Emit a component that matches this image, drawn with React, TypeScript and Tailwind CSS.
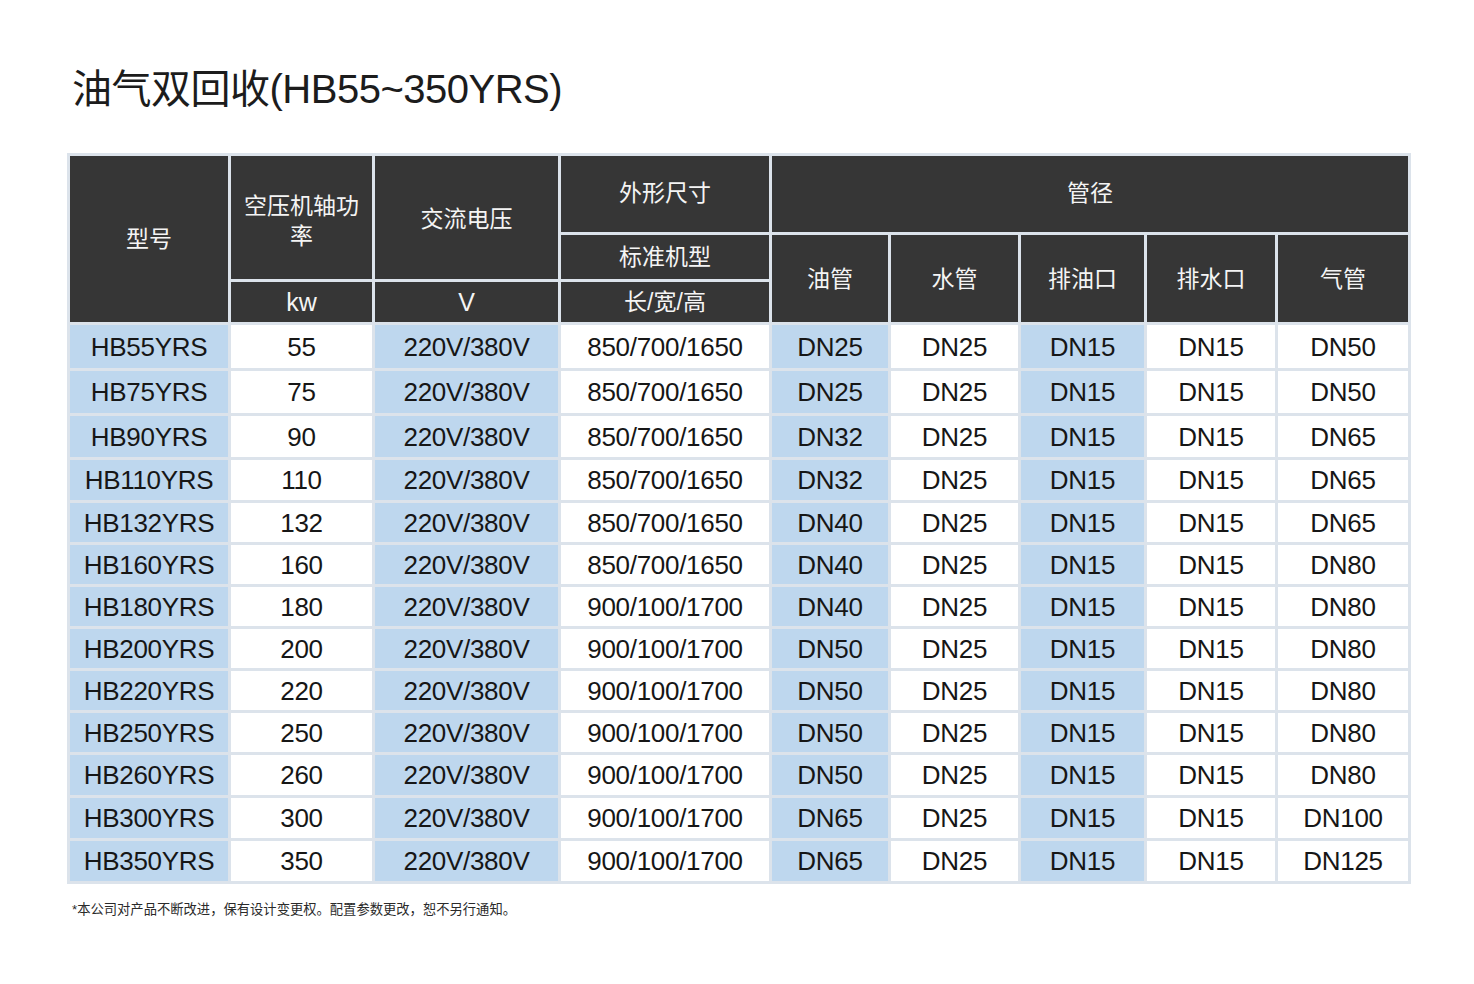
import React from "react";

const rows: string[][] = [
  ["HB55YRS", "55", "220V/380V", "850/700/1650", "DN25", "DN25", "DN15", "DN15", "DN50"],
  ["HB75YRS", "75", "220V/380V", "850/700/1650", "DN25", "DN25", "DN15", "DN15", "DN50"],
  ["HB90YRS", "90", "220V/380V", "850/700/1650", "DN32", "DN25", "DN15", "DN15", "DN65"],
  ["HB110YRS", "110", "220V/380V", "850/700/1650", "DN32", "DN25", "DN15", "DN15", "DN65"],
  ["HB132YRS", "132", "220V/380V", "850/700/1650", "DN40", "DN25", "DN15", "DN15", "DN65"],
  ["HB160YRS", "160", "220V/380V", "850/700/1650", "DN40", "DN25", "DN15", "DN15", "DN80"],
  ["HB180YRS", "180", "220V/380V", "900/100/1700", "DN40", "DN25", "DN15", "DN15", "DN80"],
  ["HB200YRS", "200", "220V/380V", "900/100/1700", "DN50", "DN25", "DN15", "DN15", "DN80"],
  ["HB220YRS", "220", "220V/380V", "900/100/1700", "DN50", "DN25", "DN15", "DN15", "DN80"],
  ["HB250YRS", "250", "220V/380V", "900/100/1700", "DN50", "DN25", "DN15", "DN15", "DN80"],
  ["HB260YRS", "260", "220V/380V", "900/100/1700", "DN50", "DN25", "DN15", "DN15", "DN80"],
  ["HB300YRS", "300", "220V/380V", "900/100/1700", "DN65", "DN25", "DN15", "DN15", "DN100"],
  ["HB350YRS", "350", "220V/380V", "900/100/1700", "DN65", "DN25", "DN15", "DN15", "DN125"],
];

const blueCols = new Set([0, 2, 4, 6]);

const H = "bg-[#363636] text-[#f4f4f4] flex items-center justify-center text-center text-[23px] leading-[30px]";
const cjk = { fontFamily: '"Liberation Sans", "Noto Sans CJK SC", sans-serif' };

export default function App() {
  return (
    <div className="min-h-[984px] w-[1474px] bg-white pl-[67px] pt-[64px]" style={cjk}>
      <h1 className="ml-[5px] text-[40px] leading-[50px] text-[#1c1c1c] tracking-[-0.5px] font-normal">
        油气双回收(HB55~350YRS)
      </h1>
      <div className="mt-[39px] inline-grid bg-[#dce3eb] p-[3px] gap-[3px] grid-cols-[158px_141px_183px_208px_116px_127px_123px_128px_130px] grid-rows-[76px_44px_40px_43px_42px_41px_40px_39px_39px_39px_39px_39px_39px_40px_40px_40px]">
        <div className={`${H} col-start-1 row-start-1 row-span-3`}>型号</div>
        <div className={`${H} col-start-2 row-start-1 row-span-2 pt-[6px]`}>
          空压机轴功
          <br />率
        </div>
        <div className={`${H} col-start-2 row-start-3 text-[25px]`}>kw</div>
        <div className={`${H} col-start-3 row-start-1 row-span-2 pt-[2px]`}>交流电压</div>
        <div className={`${H} col-start-3 row-start-3 text-[25px]`}>V</div>
        <div className={`${H} col-start-4 row-start-1 pb-[2px]`}>外形尺寸</div>
        <div className={`${H} col-start-4 row-start-2`}>标准机型</div>
        <div className={`${H} col-start-4 row-start-3`}>长/宽/高</div>
        <div className={`${H} col-start-5 col-span-5 row-start-1 pb-[2px]`}>管径</div>
        <div className={`${H} col-start-5 row-start-2 row-span-2`}>油管</div>
        <div className={`${H} col-start-6 row-start-2 row-span-2`}>水管</div>
        <div className={`${H} col-start-7 row-start-2 row-span-2`}>排油口</div>
        <div className={`${H} col-start-8 row-start-2 row-span-2`}>排水口</div>
        <div className={`${H} col-start-9 row-start-2 row-span-2`}>气管</div>
        {rows.map((r, ri) =>
          r.map((c, ci) => (
            <div
              key={`${ri}-${ci}`}
              className={`${blueCols.has(ci) ? "bg-[#bed7ee]" : "bg-white"} flex items-center justify-center text-[26px] leading-none text-[#161616] tracking-[-0.3px]`}
            >
              {c}
            </div>
          ))
        )}
      </div>
      <p className="ml-[5px] mt-[16px] text-[13.3px] leading-[20px] text-[#2a2a2a]">
        *本公司对产品不断改进，保有设计变更权。配置参数更改，恕不另行通知。
      </p>
    </div>
  );
}
